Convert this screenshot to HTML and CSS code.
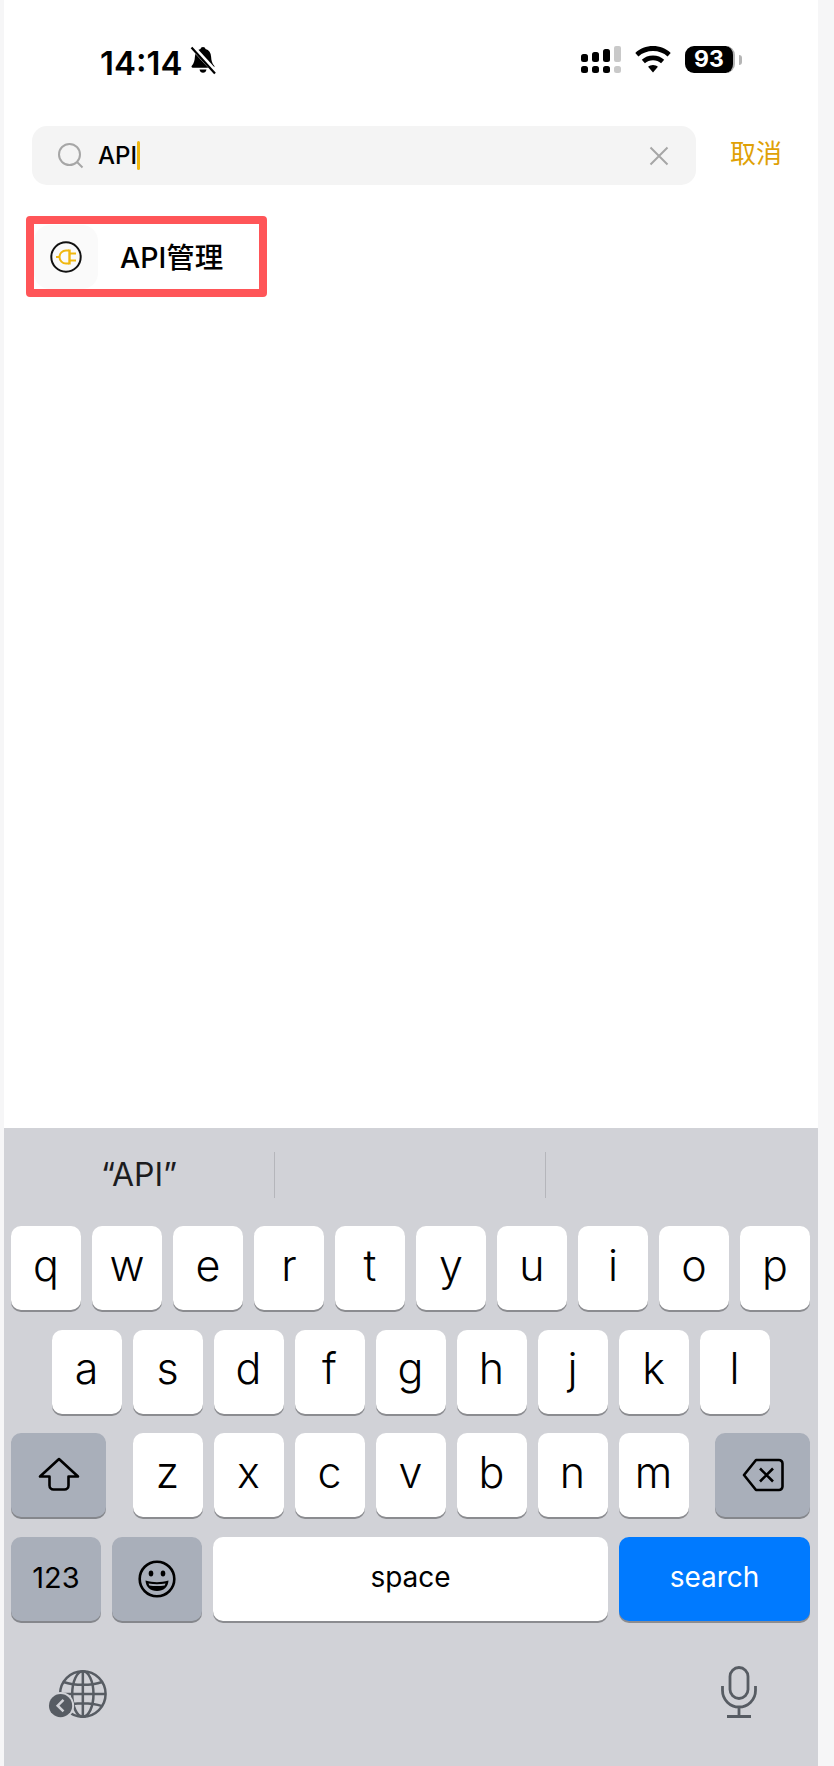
FILE: index.html
```html
<!DOCTYPE html>
<html lang="zh">
<head>
    <meta charset="UTF-8">
    <meta name="viewport" content="width=device-width, initial-scale=1.0">
    <title>API 搜索</title>
    <link rel="stylesheet" href="styles.css">
</head>
<body>
    <div class="screen">
        <div class="statusbar">
            <div class="status-left">
                <span class="time">14:14</span>
                <svg class="bell" width="28" height="30" viewBox="0 0 28 30">
                    <path d="M14 2c1.400 0 2.300.9 2.500 2.100 3.600 1 5.400 4 5.600 7.600.2 4 1 6.600 3.100 9 .7.9.2 2-1 2H3.800c-1.200 0-1.700-1.100-1-2 2.100-2.400 2.900-5 3.100-9 .2-3.600 2-6.600 5.600-7.600C11.700 2.900 12.600 2 14 2z" fill="#000"/>
                    <path d="M10.500 24.500h7c-.3 2-1.700 3.300-3.500 3.300s-3.200-1.300-3.500-3.300z" fill="#000"/>
                    <path d="M3 1.500l24 26" stroke="#fff" stroke-width="5"/>
                    <path d="M2.500 2.500l23.500 26" stroke="#000" stroke-width="2.200"/>
                </svg>
            </div>
            <div class="status-right">
                <svg class="signal" width="42" height="28" viewBox="0 0 42 28">
                    <rect x="0" y="8" width="7" height="8" rx="2.500" fill="#000"/>
                    <rect x="11" y="6" width="7" height="10" rx="2.500" fill="#000"/>
                    <rect x="22" y="3" width="7" height="13" rx="2.500" fill="#000"/>
                    <rect x="33" y="0" width="7" height="16" rx="2" fill="#c9c9c9"/>
                    <rect x="0" y="20" width="7" height="7" rx="2.500" fill="#000"/>
                    <rect x="11" y="20" width="7" height="7" rx="2.500" fill="#000"/>
                    <rect x="22" y="20" width="7" height="7" rx="2.500" fill="#000"/>
                    <rect x="33" y="20" width="7" height="7" rx="2.500" fill="#c9c9c9"/>
                </svg>
                <svg class="wifi" width="36" height="27" viewBox="0 0 36 27">
                    <path d="M18 0c6.800 0 13 2.600 17.700 6.900l-3.100 3.500C28.700 7 23.600 5 18 5S7.300 7 3.400 10.400L.3 6.900C5 2.600 11.200 0 18 0z" fill="#000"/>
                    <path d="M18 9.500c4.300 0 8.200 1.600 11.200 4.200l-3.100 3.500c-2.200-1.900-5-3-8.100-3s-5.900 1.100-8.100 3l-3.100-3.500c3-2.600 6.900-4.200 11.200-4.200z" fill="#000"/>
                    <path d="M18 19c1.900 0 3.600.7 4.900 1.800L18 26.500l-4.900-5.700c1.300-1.100 3-1.800 4.900-1.800z" fill="#000"/>
                </svg>
                <div class="battery">
                    <span class="battery-num">93</span>
                </div>
                <span class="battery-nub"></span>
            </div>
        </div>

        <div class="searchrow">
            <div class="searchbox">
                <svg class="search-icon" width="26" height="26" viewBox="0 0 26 26">
                    <circle cx="11.500" cy="11.500" r="10.500" fill="none" stroke="#a6a6a6" stroke-width="2"/>
                    <path d="M19 19l5.500 5.500" stroke="#a6a6a6" stroke-width="2"/>
                </svg>
                <span class="search-text">API</span>
                <span class="caret"></span>
                <svg class="clear-icon" width="20" height="20" viewBox="0 0 20 20">
                    <path d="M1.500 1.500l17 17M18.500 1.500l-17 17" stroke="#a6a6a6" stroke-width="2"/>
                </svg>
            </div>
            <span class="cancel">取消</span>
        </div>

        <div class="result">
            <div class="result-icon">
                <svg width="34" height="34" viewBox="0 0 34 34">
                    <circle cx="17" cy="17" r="14.700" fill="none" stroke="#111" stroke-width="2"/>
                    <path d="M7 17h3.500M20 10.500h-3a6.500 6.500 0 0 0 0 13h3" fill="none" stroke="#f0b70f" stroke-width="2"/>
                    <path d="M20.500 9.500v15" stroke="#f0b70f" stroke-width="2.400"/>
                    <path d="M21 13.500h6M21 20.500h6" stroke="#f0b70f" stroke-width="2"/>
                </svg>
            </div>
            <span class="result-name">API管理</span>
        </div>

        <div class="keyboard">
            <div class="suggestions">
                <div class="suggestion">“API”</div>
                <div class="suggestion"></div>
                <div class="suggestion"></div>
            </div>
            <div class="keys">
                <div class="row">
                    <div class="key">q</div><div class="key">w</div><div class="key">e</div><div class="key">r</div><div class="key">t</div>
                    <div class="key">y</div><div class="key">u</div><div class="key">i</div><div class="key">o</div><div class="key">p</div>
                </div>
                <div class="row row-center">
                    <div class="key">a</div><div class="key">s</div><div class="key">d</div><div class="key">f</div><div class="key">g</div>
                    <div class="key">h</div><div class="key">j</div><div class="key">k</div><div class="key">l</div>
                </div>
                <div class="row row-between">
                    <div class="key key-fn key-side">
                        <svg width="42" height="36" viewBox="0 0 42 36">
                            <path d="M21 2L2 19.500h9.500v9a4 4 0 0 0 4 4h11a4 4 0 0 0 4-4v-9H40z" fill="none" stroke="#000" stroke-width="2.600" stroke-linejoin="round"/>
                        </svg>
                    </div>
                    <div class="letters">
                        <div class="key">z</div><div class="key">x</div><div class="key">c</div><div class="key">v</div>
                        <div class="key">b</div><div class="key">n</div><div class="key">m</div>
                    </div>
                    <div class="key key-fn key-side">
                        <svg width="42" height="34" viewBox="0 0 42 34">
                            <path d="M14 2h23a3.500 3.500 0 0 1 3.500 3.500v23A3.500 3.500 0 0 1 37 32H14L2 17z" fill="none" stroke="#000" stroke-width="2.600" stroke-linejoin="round"/>
                            <path d="M18 10.500l13 13M31 10.500l-13 13" stroke="#000" stroke-width="2.600"/>
                        </svg>
                    </div>
                </div>
                <div class="row">
                    <div class="key key-fn key-label key-num">123</div>
                    <div class="key key-fn key-emoji">
                        <svg width="38" height="38" viewBox="0 0 38 38">
                            <circle cx="19" cy="19" r="17.300" fill="none" stroke="#000" stroke-width="2.600"/>
                            <ellipse cx="13" cy="13.500" rx="2.300" ry="3" fill="#000"/>
                            <ellipse cx="25" cy="13.500" rx="2.300" ry="3" fill="#000"/>
                            <path d="M7.500 20.500c4 1.200 7.800 1.700 11.500 1.700s7.500-.5 11.500-1.700c-.3 6.500-5 10.500-11.500 10.500S7.800 27 7.500 20.500z" fill="#000"/>
                            <path d="M10.500 23.500c5.600 1 11.400 1 17 0l-.8 2c-5 .8-10.400.8-15.400 0z" fill="#a9afba"/>
                        </svg>
                    </div>
                    <div class="key key-label key-space">space</div>
                    <div class="key key-label key-search">search</div>
                </div>
            </div>
            <div class="kb-bottom">
                <svg class="globe" width="60" height="54" viewBox="0 0 62 54">
                    <g fill="none" stroke="#575c63" stroke-width="2.600">
                        <circle cx="36" cy="26" r="23.500"/>
                        <ellipse cx="36" cy="26" rx="11" ry="23.500"/>
                        <path d="M36 2.500v47M12.500 26h47M16 13.500c12 4 28 4 40 0M16 38.500c12-4 28-4 40 0"/>
                    </g>
                    <circle cx="13" cy="38" r="14" fill="#d1d2d7"/>
                    <circle cx="13" cy="38" r="12" fill="#575c63"/>
                    <path d="M16 32l-6 6 6 6" fill="none" stroke="#d1d2d7" stroke-width="2.600"/>
                </svg>
                <svg class="mic" width="36" height="52" viewBox="0 0 36 52">
                    <rect x="9" y="1.500" width="18" height="31" rx="9" fill="none" stroke="#575c63" stroke-width="2.800"/>
                    <path d="M1.500 20v4.500a16.500 16.500 0 0 0 33 0V20M18 41v9M6 50.500h24" fill="none" stroke="#575c63" stroke-width="2.800"/>
                </svg>
            </div>
        </div>
    </div>
</body>
</html>
```

FILE: styles.css
```css
* {
    box-sizing: border-box;
}
body {
    margin: 0;
    background: #f6f6f7;
    font-family: Inter, "Noto Sans CJK SC", sans-serif;
    color: #000;
}
.screen {
    width: 814px;
    height: 1766px;
    margin-left: 4px;
    background: #fff;
    display: flex;
    flex-direction: column;
}

/* status bar */
.statusbar {
    height: 126px;
    display: flex;
    justify-content: space-between;
    padding: 45px 76px 0 96px;
}
.status-left {
    display: flex;
    align-items: flex-start;
    gap: 7px;
}
.time {
    font-size: 33px;
    font-weight: 600;
    line-height: 36px;
}
.status-right {
    display: flex;
    align-items: flex-start;
    padding-top: 1px;
}
.wifi {
    margin-left: 12px;
}
.battery {
    width: 50px;
    height: 27px;
    margin-left: 14px;
    background: #000;
    border-radius: 9px;
    border-right: 2px solid #b5b5b5;
    color: #fff;
    text-align: center;
}
.battery-num {
    display: block;
    font-size: 23px;
    font-weight: 700;
    line-height: 27px;
}
.battery-nub {
    width: 3px;
    height: 10px;
    margin: 9px 0 0 4px;
    background: #b5b5b5;
    border-radius: 0 3px 3px 0;
}

/* search */
.searchrow {
    display: flex;
    align-items: center;
    padding-left: 28px;
}
.searchbox {
    width: 664px;
    height: 59px;
    background: #f4f4f4;
    border-radius: 15px;
    display: flex;
    align-items: center;
    padding: 0 27px 0 26px;
}
.search-text {
    margin-left: 14px;
    font-size: 24px;
    font-weight: 500;
}
.caret {
    width: 3px;
    height: 29px;
    background: #f0b70f;
    border-radius: 2px;
}
.clear-icon {
    margin-left: auto;
}
.cancel {
    margin: 0 0 3px 34px;
    font-size: 26px;
    line-height: 32px;
    color: #e0a106;
}

/* result */
.result {
    width: 241px;
    height: 81px;
    margin: 31px 0 0 22px;
    border: 8px solid #ff5558;
    border-radius: 4px;
    display: flex;
    align-items: center;
}
.result-icon {
    width: 64px;
    height: 64px;
    background: #fafafa;
    border-radius: 16px;
    display: flex;
    align-items: center;
    justify-content: center;
}
.result-name {
    margin: 0 0 2px 22px;
    font-size: 28.500px;
    font-weight: 500;
}

/* keyboard */
.keyboard {
    margin-top: auto;
    height: 638px;
    background: #d1d2d7;
    display: flex;
    flex-direction: column;
}
.suggestions {
    height: 98px;
    padding-top: 24px;
    display: flex;
}
.suggestion {
    width: 271px;
    height: 46px;
    border-right: 1px solid #b5b6bb;
    font-size: 32px;
    font-weight: 400;
    line-height: 46px;
    color: #1c1c1e;
    text-align: center;
}
.suggestion:last-child {
    border-right: none;
}
.keys {
    display: flex;
    flex-direction: column;
    gap: 19.700px;
    padding: 0 8px 0 7px;
}
.row {
    display: flex;
    gap: 11px;
}
.row-center {
    justify-content: center;
}
.row-between {
    justify-content: space-between;
}
.letters {
    display: flex;
    gap: 11px;
}
.key {
    width: 70px;
    height: 84px;
    background: #fff;
    border-radius: 10px;
    box-shadow: 0 2px 0 #8b8c90;
    display: flex;
    align-items: center;
    justify-content: center;
    font-size: 43px;
    font-weight: 300;
    padding-bottom: 7px;
}
.key-fn {
    background: #a9afba;
    box-shadow: 0 2px 0 #85878c;
}
.key-side {
    width: 95px;
    padding-bottom: 0;
}
.key-label {
    font-size: 28px;
    font-weight: 400;
    padding-bottom: 4px;
}
.key-num {
    width: 90px;
    font-size: 29px;
}
.key-emoji {
    width: 90px;
    padding-bottom: 0;
}
.key-space {
    flex: 1;
}
.key-search {
    width: 191px;
    background: #007aff;
    color: #fff;
}
.kb-bottom {
    display: flex;
    justify-content: space-between;
    padding: 47px 61px 0 44px;
}
.mic {
    margin-top: -2px;
}
```
